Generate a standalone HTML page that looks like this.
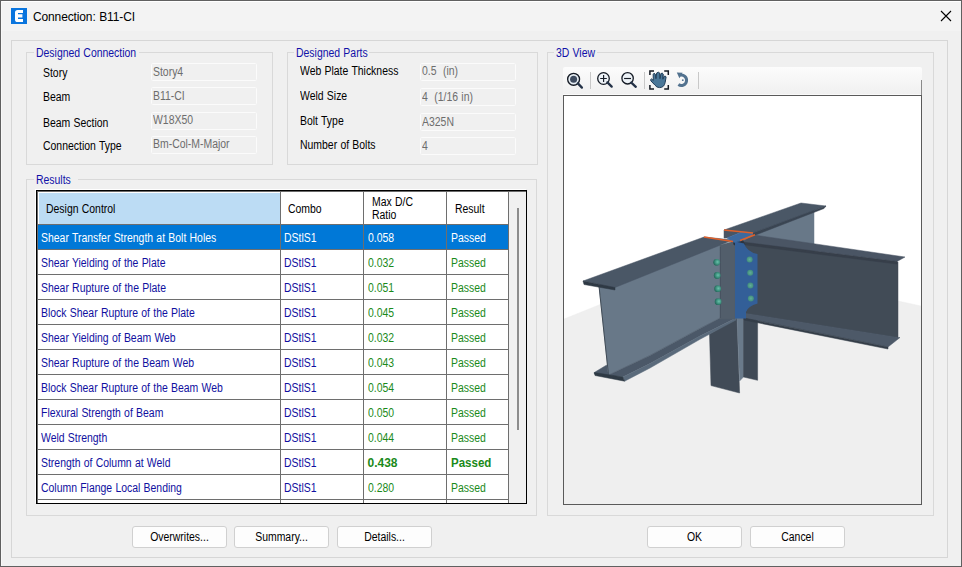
<!DOCTYPE html>
<html><head><meta charset="utf-8"><style>
html,body{margin:0;padding:0;}
body{width:962px;height:567px;position:relative;overflow:hidden;background:#f0f0f0;font-family:"Liberation Sans", sans-serif;}
.t{position:absolute;white-space:nowrap;word-spacing:0.4px;}
</style></head><body>
<div style="position:absolute;left:0px;top:0px;width:962px;height:567px;box-sizing:border-box;border:1px solid #606060;background:#f0f0f0"></div>
<div style="position:absolute;left:1px;top:1px;width:960px;height:30px;background:#f3f3f3"></div>
<div style="position:absolute;left:1px;top:1px;width:960px;height:1px;background:#fff"></div>
<div style="position:absolute;left:1px;top:1px;width:1px;height:565px;background:#f8f8f8"></div>
<svg style="position:absolute;left:11px;top:8px" width="16" height="16" viewBox="0 0 16 16"><rect width="16" height="16" fill="#0a75de"/><path d="M4,4.6 Q4,2 6.6,2 H12 V5 H7 V6.3 H11.4 V9.6 H7 V11 H12 V14 H6.6 Q4,14 4,11.4 Z" fill="#fff"/></svg>
<div class="t" style="left:33px;top:9.64px;font-size:12px;line-height:14px;color:#000;letter-spacing:-0.13px;font-weight:normal;transform-origin:0 0;transform:scaleX(1);">Connection: B11-CI</div>
<svg style="position:absolute;left:940px;top:10px" width="12" height="12" viewBox="0 0 12 12"><path d="M1 1 L11 11 M11 1 L1 11" stroke="#000" stroke-width="1.1"/></svg>
<div style="position:absolute;left:11px;top:40px;width:937px;height:518px;box-sizing:border-box;border:1px solid #d6d6d6"></div>
<div style="position:absolute;left:26px;top:52px;width:247px;height:113px;box-sizing:border-box;border:1px solid #d9d9d9"></div>
<div style="position:absolute;left:34px;top:49px;width:105px;height:6px;background:#f0f0f0"></div>
<div class="t" style="left:36px;top:46.14px;font-size:12px;line-height:14px;color:#1010a8;letter-spacing:0px;font-weight:normal;transform-origin:0 0;transform:scaleX(0.87);">Designed Connection</div>
<div style="position:absolute;left:287px;top:52px;width:251px;height:113px;box-sizing:border-box;border:1px solid #d9d9d9"></div>
<div style="position:absolute;left:294px;top:49px;width:75px;height:6px;background:#f0f0f0"></div>
<div class="t" style="left:296px;top:46.14px;font-size:12px;line-height:14px;color:#1010a8;letter-spacing:0px;font-weight:normal;transform-origin:0 0;transform:scaleX(0.87);">Designed Parts</div>
<div style="position:absolute;left:547px;top:52px;width:387px;height:464px;box-sizing:border-box;border:1px solid #d9d9d9"></div>
<div style="position:absolute;left:554px;top:49px;width:43px;height:6px;background:#f0f0f0"></div>
<div class="t" style="left:556px;top:46.14px;font-size:12px;line-height:14px;color:#1010a8;letter-spacing:0px;font-weight:normal;transform-origin:0 0;transform:scaleX(0.87);">3D View</div>
<div style="position:absolute;left:26px;top:179px;width:511px;height:337px;box-sizing:border-box;border:1px solid #d9d9d9"></div>
<div style="position:absolute;left:34px;top:176px;width:44px;height:6px;background:#f0f0f0"></div>
<div class="t" style="left:36px;top:173.14px;font-size:12px;line-height:14px;color:#1010a8;letter-spacing:0px;font-weight:normal;transform-origin:0 0;transform:scaleX(0.87);">Results</div>
<div class="t" style="left:43px;top:65.64px;font-size:12px;line-height:14px;color:#000;letter-spacing:0px;font-weight:normal;transform-origin:0 0;transform:scaleX(0.87);">Story</div>
<div style="position:absolute;left:151px;top:63px;width:106px;height:18px;box-sizing:border-box;border:1px solid #fbfbfb;border-radius:1.5px;background:#f0f0f0"></div>
<div class="t" style="left:153px;top:64.84px;font-size:12px;line-height:14px;color:#6d6d6d;letter-spacing:0px;font-weight:normal;transform-origin:0 0;transform:scaleX(0.87);">Story4</div>
<div class="t" style="left:43px;top:89.74px;font-size:12px;line-height:14px;color:#000;letter-spacing:0px;font-weight:normal;transform-origin:0 0;transform:scaleX(0.87);">Beam</div>
<div style="position:absolute;left:151px;top:87px;width:106px;height:18px;box-sizing:border-box;border:1px solid #fbfbfb;border-radius:1.5px;background:#f0f0f0"></div>
<div class="t" style="left:153px;top:88.64px;font-size:12px;line-height:14px;color:#6d6d6d;letter-spacing:0px;font-weight:normal;transform-origin:0 0;transform:scaleX(0.87);">B11-CI</div>
<div class="t" style="left:43px;top:115.64px;font-size:12px;line-height:14px;color:#000;letter-spacing:0px;font-weight:normal;transform-origin:0 0;transform:scaleX(0.87);">Beam Section</div>
<div style="position:absolute;left:151px;top:112px;width:106px;height:18px;box-sizing:border-box;border:1px solid #fbfbfb;border-radius:1.5px;background:#f0f0f0"></div>
<div class="t" style="left:153px;top:113.44px;font-size:12px;line-height:14px;color:#6d6d6d;letter-spacing:0px;font-weight:normal;transform-origin:0 0;transform:scaleX(0.87);">W18X50</div>
<div class="t" style="left:43px;top:138.94px;font-size:12px;line-height:14px;color:#000;letter-spacing:0px;font-weight:normal;transform-origin:0 0;transform:scaleX(0.87);">Connection Type</div>
<div style="position:absolute;left:151px;top:136px;width:106px;height:18px;box-sizing:border-box;border:1px solid #fbfbfb;border-radius:1.5px;background:#f0f0f0"></div>
<div class="t" style="left:153px;top:137.44px;font-size:12px;line-height:14px;color:#6d6d6d;letter-spacing:0px;font-weight:normal;transform-origin:0 0;transform:scaleX(0.87);">Bm-Col-M-Major</div>
<div class="t" style="left:300px;top:63.54px;font-size:12px;line-height:14px;color:#000;letter-spacing:0px;font-weight:normal;transform-origin:0 0;transform:scaleX(0.87);">Web Plate Thickness</div>
<div style="position:absolute;left:420px;top:63px;width:96px;height:18px;box-sizing:border-box;border:1px solid #fbfbfb;border-radius:1.5px;background:#f0f0f0"></div>
<div class="t" style="left:422px;top:64.24px;font-size:12px;line-height:14px;color:#6d6d6d;letter-spacing:0px;font-weight:normal;transform-origin:0 0;transform:scaleX(0.87);">0.5&nbsp; (in)</div>
<div class="t" style="left:300px;top:89.04px;font-size:12px;line-height:14px;color:#000;letter-spacing:0px;font-weight:normal;transform-origin:0 0;transform:scaleX(0.87);">Weld Size</div>
<div style="position:absolute;left:420px;top:88px;width:96px;height:18px;box-sizing:border-box;border:1px solid #fbfbfb;border-radius:1.5px;background:#f0f0f0"></div>
<div class="t" style="left:422px;top:89.84px;font-size:12px;line-height:14px;color:#6d6d6d;letter-spacing:0px;font-weight:normal;transform-origin:0 0;transform:scaleX(0.87);">4&nbsp; (1/16 in)</div>
<div class="t" style="left:300px;top:114.34px;font-size:12px;line-height:14px;color:#000;letter-spacing:0px;font-weight:normal;transform-origin:0 0;transform:scaleX(0.87);">Bolt Type</div>
<div style="position:absolute;left:420px;top:113px;width:96px;height:18px;box-sizing:border-box;border:1px solid #fbfbfb;border-radius:1.5px;background:#f0f0f0"></div>
<div class="t" style="left:422px;top:114.74px;font-size:12px;line-height:14px;color:#6d6d6d;letter-spacing:0px;font-weight:normal;transform-origin:0 0;transform:scaleX(0.87);">A325N</div>
<div class="t" style="left:300px;top:137.54px;font-size:12px;line-height:14px;color:#000;letter-spacing:0px;font-weight:normal;transform-origin:0 0;transform:scaleX(0.87);">Number of Bolts</div>
<div style="position:absolute;left:420px;top:137px;width:96px;height:18px;box-sizing:border-box;border:1px solid #fbfbfb;border-radius:1.5px;background:#f0f0f0"></div>
<div class="t" style="left:422px;top:138.74px;font-size:12px;line-height:14px;color:#6d6d6d;letter-spacing:0px;font-weight:normal;transform-origin:0 0;transform:scaleX(0.87);">4</div>
<div style="position:absolute;left:36px;top:190px;width:491px;height:314px;background:#fff;box-sizing:border-box;border:1px solid #000;box-shadow:-1px -1px 0 #fff"></div>
<div style="position:absolute;left:37px;top:191px;width:1px;height:312px;background:#6a6a6a"></div>
<div style="position:absolute;left:37px;top:191px;width:489px;height:1px;background:#6a6a6a"></div>
<div style="position:absolute;left:509px;top:192px;width:17px;height:311px;background:#f0f0f0"></div>
<div style="position:absolute;left:517px;top:208px;width:2px;height:222px;background:#8c8c8c"></div>
<div style="position:absolute;left:38px;top:192px;width:242px;height:32px;background:#bcdcf4;box-shadow:inset 1px 1px 0 #fff"></div>
<div style="position:absolute;left:280px;top:192px;width:1px;height:311px;background:#6e6e6e"></div>
<div style="position:absolute;left:363px;top:192px;width:1px;height:311px;background:#6e6e6e"></div>
<div style="position:absolute;left:446px;top:192px;width:1px;height:311px;background:#6e6e6e"></div>
<div style="position:absolute;left:508px;top:192px;width:1px;height:311px;background:#6e6e6e"></div>
<div style="position:absolute;left:38px;top:224px;width:470px;height:1px;background:#6e6e6e"></div>
<div style="position:absolute;left:38px;top:249px;width:470px;height:1px;background:#6e6e6e"></div>
<div style="position:absolute;left:38px;top:274px;width:470px;height:1px;background:#6e6e6e"></div>
<div style="position:absolute;left:38px;top:299px;width:470px;height:1px;background:#6e6e6e"></div>
<div style="position:absolute;left:38px;top:324px;width:470px;height:1px;background:#6e6e6e"></div>
<div style="position:absolute;left:38px;top:349px;width:470px;height:1px;background:#6e6e6e"></div>
<div style="position:absolute;left:38px;top:374px;width:470px;height:1px;background:#6e6e6e"></div>
<div style="position:absolute;left:38px;top:399px;width:470px;height:1px;background:#6e6e6e"></div>
<div style="position:absolute;left:38px;top:424px;width:470px;height:1px;background:#6e6e6e"></div>
<div style="position:absolute;left:38px;top:449px;width:470px;height:1px;background:#6e6e6e"></div>
<div style="position:absolute;left:38px;top:474px;width:470px;height:1px;background:#6e6e6e"></div>
<div style="position:absolute;left:38px;top:499px;width:470px;height:1px;background:#6e6e6e"></div>
<div style="position:absolute;left:38px;top:225px;width:242px;height:24px;background:#0078d7"></div>
<div style="position:absolute;left:281px;top:225px;width:82px;height:24px;background:#0078d7"></div>
<div style="position:absolute;left:364px;top:225px;width:82px;height:24px;background:#0078d7"></div>
<div style="position:absolute;left:447px;top:225px;width:61px;height:24px;background:#0078d7"></div>
<div class="t" style="left:46px;top:202.04px;font-size:12px;line-height:14px;color:#000;letter-spacing:0px;font-weight:normal;transform-origin:0 0;transform:scaleX(0.87);">Design Control</div>
<div class="t" style="left:288px;top:202.04px;font-size:12px;line-height:14px;color:#000;letter-spacing:0px;font-weight:normal;transform-origin:0 0;transform:scaleX(0.87);">Combo</div>
<div class="t" style="left:371.5px;top:195.04px;font-size:12px;line-height:14px;color:#000;letter-spacing:0px;font-weight:normal;transform-origin:0 0;transform:scaleX(0.87);">Max D/C</div>
<div class="t" style="left:371.5px;top:207.64px;font-size:12px;line-height:14px;color:#000;letter-spacing:0px;font-weight:normal;transform-origin:0 0;transform:scaleX(0.87);">Ratio</div>
<div class="t" style="left:454.5px;top:201.84px;font-size:12px;line-height:14px;color:#000;letter-spacing:0px;font-weight:normal;transform-origin:0 0;transform:scaleX(0.87);">Result</div>
<div class="t" style="left:41px;top:230.54px;font-size:12px;line-height:14px;color:#fff;letter-spacing:0px;font-weight:normal;transform-origin:0 0;transform:scaleX(0.87);">Shear Transfer Strength at Bolt Holes</div>
<div class="t" style="left:284px;top:230.54px;font-size:12px;line-height:14px;color:#fff;letter-spacing:0px;font-weight:normal;transform-origin:0 0;transform:scaleX(0.87);">DStlS1</div>
<div class="t" style="left:367.5px;top:230.54px;font-size:12px;line-height:14px;color:#fff;letter-spacing:0px;font-weight:normal;transform-origin:0 0;transform:scaleX(0.87);">0.058</div>
<div class="t" style="left:450.5px;top:230.54px;font-size:12px;line-height:14px;color:#fff;letter-spacing:0px;font-weight:normal;transform-origin:0 0;transform:scaleX(0.87);">Passed</div>
<div class="t" style="left:41px;top:255.54px;font-size:12px;line-height:14px;color:#1010a0;letter-spacing:0px;font-weight:normal;transform-origin:0 0;transform:scaleX(0.87);">Shear Yielding of the Plate</div>
<div class="t" style="left:284px;top:255.54px;font-size:12px;line-height:14px;color:#1010a0;letter-spacing:0px;font-weight:normal;transform-origin:0 0;transform:scaleX(0.87);">DStlS1</div>
<div class="t" style="left:367.5px;top:255.54px;font-size:12px;line-height:14px;color:#1a8a1a;letter-spacing:0px;font-weight:normal;transform-origin:0 0;transform:scaleX(0.87);">0.032</div>
<div class="t" style="left:450.5px;top:255.54px;font-size:12px;line-height:14px;color:#1a8a1a;letter-spacing:0px;font-weight:normal;transform-origin:0 0;transform:scaleX(0.87);">Passed</div>
<div class="t" style="left:41px;top:280.54px;font-size:12px;line-height:14px;color:#1010a0;letter-spacing:0px;font-weight:normal;transform-origin:0 0;transform:scaleX(0.87);">Shear Rupture of the Plate</div>
<div class="t" style="left:284px;top:280.54px;font-size:12px;line-height:14px;color:#1010a0;letter-spacing:0px;font-weight:normal;transform-origin:0 0;transform:scaleX(0.87);">DStlS1</div>
<div class="t" style="left:367.5px;top:280.54px;font-size:12px;line-height:14px;color:#1a8a1a;letter-spacing:0px;font-weight:normal;transform-origin:0 0;transform:scaleX(0.87);">0.051</div>
<div class="t" style="left:450.5px;top:280.54px;font-size:12px;line-height:14px;color:#1a8a1a;letter-spacing:0px;font-weight:normal;transform-origin:0 0;transform:scaleX(0.87);">Passed</div>
<div class="t" style="left:41px;top:305.54px;font-size:12px;line-height:14px;color:#1010a0;letter-spacing:0px;font-weight:normal;transform-origin:0 0;transform:scaleX(0.87);">Block Shear Rupture of the Plate</div>
<div class="t" style="left:284px;top:305.54px;font-size:12px;line-height:14px;color:#1010a0;letter-spacing:0px;font-weight:normal;transform-origin:0 0;transform:scaleX(0.87);">DStlS1</div>
<div class="t" style="left:367.5px;top:305.54px;font-size:12px;line-height:14px;color:#1a8a1a;letter-spacing:0px;font-weight:normal;transform-origin:0 0;transform:scaleX(0.87);">0.045</div>
<div class="t" style="left:450.5px;top:305.54px;font-size:12px;line-height:14px;color:#1a8a1a;letter-spacing:0px;font-weight:normal;transform-origin:0 0;transform:scaleX(0.87);">Passed</div>
<div class="t" style="left:41px;top:330.54px;font-size:12px;line-height:14px;color:#1010a0;letter-spacing:0px;font-weight:normal;transform-origin:0 0;transform:scaleX(0.87);">Shear Yielding of Beam Web</div>
<div class="t" style="left:284px;top:330.54px;font-size:12px;line-height:14px;color:#1010a0;letter-spacing:0px;font-weight:normal;transform-origin:0 0;transform:scaleX(0.87);">DStlS1</div>
<div class="t" style="left:367.5px;top:330.54px;font-size:12px;line-height:14px;color:#1a8a1a;letter-spacing:0px;font-weight:normal;transform-origin:0 0;transform:scaleX(0.87);">0.032</div>
<div class="t" style="left:450.5px;top:330.54px;font-size:12px;line-height:14px;color:#1a8a1a;letter-spacing:0px;font-weight:normal;transform-origin:0 0;transform:scaleX(0.87);">Passed</div>
<div class="t" style="left:41px;top:355.54px;font-size:12px;line-height:14px;color:#1010a0;letter-spacing:0px;font-weight:normal;transform-origin:0 0;transform:scaleX(0.87);">Shear Rupture of the Beam Web</div>
<div class="t" style="left:284px;top:355.54px;font-size:12px;line-height:14px;color:#1010a0;letter-spacing:0px;font-weight:normal;transform-origin:0 0;transform:scaleX(0.87);">DStlS1</div>
<div class="t" style="left:367.5px;top:355.54px;font-size:12px;line-height:14px;color:#1a8a1a;letter-spacing:0px;font-weight:normal;transform-origin:0 0;transform:scaleX(0.87);">0.043</div>
<div class="t" style="left:450.5px;top:355.54px;font-size:12px;line-height:14px;color:#1a8a1a;letter-spacing:0px;font-weight:normal;transform-origin:0 0;transform:scaleX(0.87);">Passed</div>
<div class="t" style="left:41px;top:380.54px;font-size:12px;line-height:14px;color:#1010a0;letter-spacing:0px;font-weight:normal;transform-origin:0 0;transform:scaleX(0.87);">Block Shear Rupture of the Beam Web</div>
<div class="t" style="left:284px;top:380.54px;font-size:12px;line-height:14px;color:#1010a0;letter-spacing:0px;font-weight:normal;transform-origin:0 0;transform:scaleX(0.87);">DStlS1</div>
<div class="t" style="left:367.5px;top:380.54px;font-size:12px;line-height:14px;color:#1a8a1a;letter-spacing:0px;font-weight:normal;transform-origin:0 0;transform:scaleX(0.87);">0.054</div>
<div class="t" style="left:450.5px;top:380.54px;font-size:12px;line-height:14px;color:#1a8a1a;letter-spacing:0px;font-weight:normal;transform-origin:0 0;transform:scaleX(0.87);">Passed</div>
<div class="t" style="left:41px;top:405.54px;font-size:12px;line-height:14px;color:#1010a0;letter-spacing:0px;font-weight:normal;transform-origin:0 0;transform:scaleX(0.87);">Flexural Strength of Beam</div>
<div class="t" style="left:284px;top:405.54px;font-size:12px;line-height:14px;color:#1010a0;letter-spacing:0px;font-weight:normal;transform-origin:0 0;transform:scaleX(0.87);">DStlS1</div>
<div class="t" style="left:367.5px;top:405.54px;font-size:12px;line-height:14px;color:#1a8a1a;letter-spacing:0px;font-weight:normal;transform-origin:0 0;transform:scaleX(0.87);">0.050</div>
<div class="t" style="left:450.5px;top:405.54px;font-size:12px;line-height:14px;color:#1a8a1a;letter-spacing:0px;font-weight:normal;transform-origin:0 0;transform:scaleX(0.87);">Passed</div>
<div class="t" style="left:41px;top:430.54px;font-size:12px;line-height:14px;color:#1010a0;letter-spacing:0px;font-weight:normal;transform-origin:0 0;transform:scaleX(0.87);">Weld Strength</div>
<div class="t" style="left:284px;top:430.54px;font-size:12px;line-height:14px;color:#1010a0;letter-spacing:0px;font-weight:normal;transform-origin:0 0;transform:scaleX(0.87);">DStlS1</div>
<div class="t" style="left:367.5px;top:430.54px;font-size:12px;line-height:14px;color:#1a8a1a;letter-spacing:0px;font-weight:normal;transform-origin:0 0;transform:scaleX(0.87);">0.044</div>
<div class="t" style="left:450.5px;top:430.54px;font-size:12px;line-height:14px;color:#1a8a1a;letter-spacing:0px;font-weight:normal;transform-origin:0 0;transform:scaleX(0.87);">Passed</div>
<div class="t" style="left:41px;top:455.54px;font-size:12px;line-height:14px;color:#1010a0;letter-spacing:0px;font-weight:normal;transform-origin:0 0;transform:scaleX(0.87);">Strength of Column at Weld</div>
<div class="t" style="left:284px;top:455.54px;font-size:12px;line-height:14px;color:#1010a0;letter-spacing:0px;font-weight:normal;transform-origin:0 0;transform:scaleX(0.87);">DStlS1</div>
<div class="t" style="left:367.5px;top:455.54px;font-size:12px;line-height:14px;color:#1a8a1a;letter-spacing:0px;font-weight:bold;transform-origin:0 0;transform:scaleX(1);">0.438</div>
<div class="t" style="left:450.5px;top:455.54px;font-size:12px;line-height:14px;color:#1a8a1a;letter-spacing:0px;font-weight:bold;transform-origin:0 0;transform:scaleX(0.96);">Passed</div>
<div class="t" style="left:41px;top:480.54px;font-size:12px;line-height:14px;color:#1010a0;letter-spacing:0px;font-weight:normal;transform-origin:0 0;transform:scaleX(0.87);">Column Flange Local Bending</div>
<div class="t" style="left:284px;top:480.54px;font-size:12px;line-height:14px;color:#1010a0;letter-spacing:0px;font-weight:normal;transform-origin:0 0;transform:scaleX(0.87);">DStlS1</div>
<div class="t" style="left:367.5px;top:480.54px;font-size:12px;line-height:14px;color:#1a8a1a;letter-spacing:0px;font-weight:normal;transform-origin:0 0;transform:scaleX(0.87);">0.280</div>
<div class="t" style="left:450.5px;top:480.54px;font-size:12px;line-height:14px;color:#1a8a1a;letter-spacing:0px;font-weight:normal;transform-origin:0 0;transform:scaleX(0.87);">Passed</div>
<div style="position:absolute;left:132px;top:526px;width:95px;height:22px;box-sizing:border-box;border:1px solid #d0d0d0;border-radius:3px;background:#fdfdfd"></div>
<div class="t" style="left:132px;top:530.04px;width:95px;text-align:center;font-size:12px;line-height:14px;transform:scaleX(0.87)">Overwrites...</div>
<div style="position:absolute;left:234px;top:526px;width:95px;height:22px;box-sizing:border-box;border:1px solid #d0d0d0;border-radius:3px;background:#fdfdfd"></div>
<div class="t" style="left:234px;top:530.04px;width:95px;text-align:center;font-size:12px;line-height:14px;transform:scaleX(0.87)">Summary...</div>
<div style="position:absolute;left:337px;top:526px;width:95px;height:22px;box-sizing:border-box;border:1px solid #d0d0d0;border-radius:3px;background:#fdfdfd"></div>
<div class="t" style="left:337px;top:530.04px;width:95px;text-align:center;font-size:12px;line-height:14px;transform:scaleX(0.87)">Details...</div>
<div style="position:absolute;left:647px;top:526px;width:95px;height:22px;box-sizing:border-box;border:1px solid #d0d0d0;border-radius:3px;background:#fdfdfd"></div>
<div class="t" style="left:647px;top:530.04px;width:95px;text-align:center;font-size:12px;line-height:14px;transform:scaleX(0.87)">OK</div>
<div style="position:absolute;left:750px;top:526px;width:95px;height:22px;box-sizing:border-box;border:1px solid #d0d0d0;border-radius:3px;background:#fdfdfd"></div>
<div class="t" style="left:750px;top:530.04px;width:95px;text-align:center;font-size:12px;line-height:14px;transform:scaleX(0.87)">Cancel</div>
<div style="position:absolute;left:563px;top:67px;width:359px;height:28px;background:linear-gradient(#fcfcfc,#f0f0f0);border-radius:2px 2px 0 0"></div>
<div style="position:absolute;left:563px;top:94px;width:359px;height:1px;background:#fafafa"></div>
<div style="position:absolute;left:921px;top:80px;width:1px;height:15px;background:#8a8a8a"></div>
<div style="position:absolute;left:590px;top:72px;width:1px;height:17px;background:#c8c8c8"></div>
<div style="position:absolute;left:644px;top:72px;width:1px;height:17px;background:#c8c8c8"></div>
<div style="position:absolute;left:698px;top:72px;width:1px;height:17px;background:#c8c8c8"></div>

<svg style="position:absolute;left:563px;top:67px" width="140" height="28" viewBox="563 67 140 28">
 <circle cx="573.6" cy="79.3" r="5.95" fill="#e6edf3" stroke="#141a24" stroke-width="1.35"/>
 <circle cx="573.6" cy="79.3" r="3.5" fill="#3e4b5f"/>
 <path d="M577.9 83.4 L581.9 87.6" stroke="#243247" stroke-width="2.3" stroke-linecap="round"/>
 <circle cx="603.5" cy="78.5" r="5.8" fill="#edf2f7" stroke="#141a24" stroke-width="1.3"/>
 <path d="M600.2 78.5 H606.8 M603.6 75.1 V81.9" stroke="#141a24" stroke-width="1.15"/>
 <path d="M607.4 82.4 L611.7 86.6" stroke="#243247" stroke-width="2.3" stroke-linecap="round"/>
 <circle cx="627.6" cy="78.3" r="5.7" fill="#edf2f7" stroke="#141a24" stroke-width="1.3"/>
 <path d="M624.1 78.5 H631" stroke="#141a24" stroke-width="1.15"/>
 <path d="M631.3 82.6 L635.8 86.8" stroke="#243247" stroke-width="2.3" stroke-linecap="round"/>
 <path d="M649.9 75 V71 H654 M664.2 71 H668.3 V75 M668.3 85 V89 H664.2 M654 89 H649.9 V85" fill="none" stroke="#151a22" stroke-width="1.5"/>
 <path d="M653.3 80.5 L653.2 74.2 Q654.1 72.3 655.2 74 L655.9 78.6 L656.7 73 Q658.4 71.4 659.7 73 L660 78.6 L661 73.6 Q662.3 72.4 663.2 74 L662.9 79.2 L664.1 76.4 Q665.5 75.4 666.1 77 L665.2 82.3 Q664.2 87.6 659.6 87.6 Q656.6 87.6 655 85.2 L650.9 80.9 Q650 79.2 651.6 78.9 Z" fill="#4a7798" stroke="#213d58" stroke-width="1" stroke-linejoin="round"/>
 <path d="M656 78.5 V74.5 M659.8 78.5 V73.8 M662.9 79 V75" stroke="#2a4864" stroke-width="0.7"/>
 <path d="M680 75.3 A5.2 5.2 0 1 1 678.4 84.6" fill="none" stroke="#52728f" stroke-width="3"/>
 <path d="M676.8 72.4 L682.6 72.8 L679.4 78.2 Z" fill="#52728f"/>
 <circle cx="682.8" cy="80.2" r="0.9" fill="#557695"/>
</svg>
<div style="position:absolute;left:563px;top:95px;width:359px;height:410px;box-sizing:border-box;border:1px solid #5a5a5a;background:#fff"></div>
<svg style="position:absolute;left:564px;top:96px" width="357" height="408" viewBox="564 96 357 408"><polygon points="564,319 711,260 921,306 921,504 564,504" fill="#efefef" stroke="#efefef" stroke-width="0.5" stroke-linejoin="round" /><polygon points="740,238 814,210 814,252 740,252" fill="#687888" stroke="#687888" stroke-width="0.5" stroke-linejoin="round" /><polygon points="724,230 801,203 826,206 753,233" fill="#4a5766" stroke="#4a5766" stroke-width="0.5" stroke-linejoin="round" /><polygon points="753,233 826,206 824,208.5 753,236" fill="#3a4552" stroke="#3a4552" stroke-width="0.5" stroke-linejoin="round" /><polygon points="709.5,334 737,318 739.6,393 711,385.6" fill="#414b57" stroke="#414b57" stroke-width="0.5" stroke-linejoin="round" /><polygon points="737,318 743.5,318 743.5,377 739.6,381" fill="#6a7a8a" stroke="#6a7a8a" stroke-width="0.5" stroke-linejoin="round" /><polygon points="743.5,318 757.6,318 757.6,380.3 743.5,377" fill="#3f4955" stroke="#3f4955" stroke-width="0.5" stroke-linejoin="round" /><polygon points="599,285 720,241 722,317 700,328.4 650,355.4 608.5,375" fill="#687888" stroke="#687888" stroke-width="0.5" stroke-linejoin="round" /><line x1="599" y1="286" x2="608.5" y2="375" stroke="#3f4a55" stroke-width="1"/><polygon points="594.3,372.5 606.7,365 608.5,375 650,355.4 700,328.4 722,317 736,316 736,318 700,336.1 650,363.6 622.7,377 594.3,374" fill="#4b5868" stroke="#4b5868" stroke-width="0.5" stroke-linejoin="round" /><polygon points="622.7,377 650,363.6 700,336.1 736,318 736,320 700,339.3 650,368 624.6,381.2" fill="#5a6a7b" stroke="#5a6a7b" stroke-width="0.5" stroke-linejoin="round" /><polygon points="594.3,372.5 622.7,377 624.6,381.2 595,375.5" fill="#2f3a45" stroke="#2f3a45" stroke-width="0.5" stroke-linejoin="round" /><polygon points="583,281 704,237 733,240 615,287.5" fill="#4a5766" stroke="#4a5766" stroke-width="0.5" stroke-linejoin="round" /><polygon points="583,281 615,287.5 615,290 584,284.5" fill="#2e3944" stroke="#2e3944" stroke-width="0.5" stroke-linejoin="round" /><polygon points="720,245 735,241 735,319 720,319" fill="#525e6b" stroke="#525e6b" stroke-width="0.5" stroke-linejoin="round" /><polygon points="742,242 898,262 898,338 746,314" fill="#414b56" stroke="#414b56" stroke-width="0.5" stroke-linejoin="round" /><polygon points="754,235 905,257 897,261.5 742,242" fill="#4a5564" stroke="#4a5564" stroke-width="0.5" stroke-linejoin="round" /><polygon points="742,242 897,261.5 897,264 742,244.5" fill="#373f4a" stroke="#373f4a" stroke-width="0.5" stroke-linejoin="round" /><polygon points="746,313.5 898,337.5 900,337.5 888,347 744,318" fill="#4d5968" stroke="#4d5968" stroke-width="0.5" stroke-linejoin="round" /><polygon points="744,318 888,347 888,349 744,320" fill="#353e49" stroke="#353e49" stroke-width="0.5" stroke-linejoin="round" /><line x1="720.5" y1="247" x2="720.5" y2="318" stroke="#465160" stroke-width="0.8"/><polygon points="732,239 742,238 745,245 734,245" fill="#2a3440" stroke="#2a3440" stroke-width="0.5" stroke-linejoin="round" /><path d="M735,241.5 L744,243.5 Q747,252 757.5,254 L757.5,303.5 Q748,306 746,312 L746,318.5 L735,318.5 Z" fill="#335f98"/><polygon points="724,230 743,231.5 727,238 724,238" fill="#4a5564" stroke="#4a5564" stroke-width="0.5" stroke-linejoin="round" /><polygon points="727,238 743,231.5 753,233.5 740.5,241 734,242.5" fill="#3d6aa0" stroke="#3d6aa0" stroke-width="0.5" stroke-linejoin="round" /><defs><radialGradient id="bl" cx="0.62" cy="0.45" r="0.6"><stop offset="0" stop-color="#6cc0ac"/><stop offset="0.55" stop-color="#3f9480"/><stop offset="1" stop-color="#25665a"/></radialGradient><radialGradient id="br" cx="0.5" cy="0.5" r="0.55"><stop offset="0" stop-color="#62ae98"/><stop offset="1" stop-color="#3e8a7a"/></radialGradient></defs><circle cx="716.7" cy="262.3" r="3.4" fill="url(#bl)"/><circle cx="717.2" cy="275.5" r="3.4" fill="url(#bl)"/><circle cx="717.6" cy="288.7" r="3.4" fill="url(#bl)"/><circle cx="718.1" cy="301.7" r="3.4" fill="url(#bl)"/><circle cx="749.7" cy="259.5" r="3" fill="url(#br)"/><circle cx="750.2" cy="272.8" r="3" fill="url(#br)"/><circle cx="750.4" cy="285.6" r="3" fill="url(#br)"/><circle cx="750.9" cy="298.4" r="3" fill="url(#br)"/><line x1="704" y1="237" x2="733" y2="241.5" stroke="#e0602a" stroke-width="1.6"/><line x1="724" y1="230" x2="753" y2="233" stroke="#e0602a" stroke-width="1.6"/><line x1="740" y1="240.6" x2="755" y2="234.8" stroke="#e0602a" stroke-width="1.6"/></svg>

</body></html>
